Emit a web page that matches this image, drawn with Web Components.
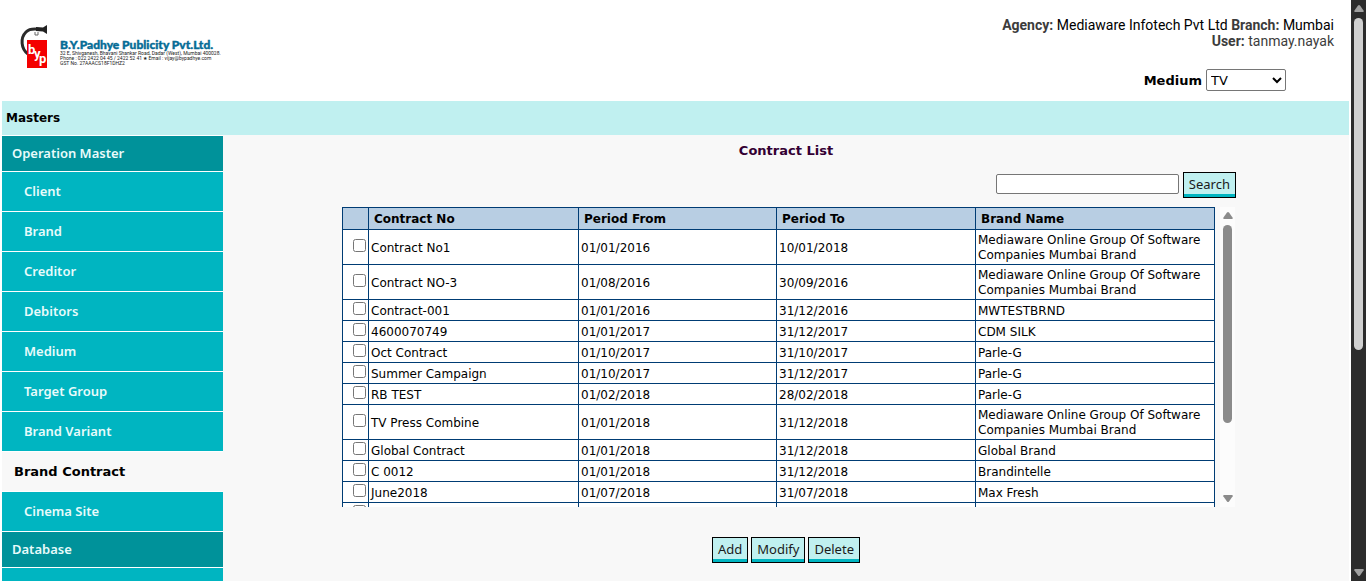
<!DOCTYPE html>
<html lang="en">
<head>
<meta charset="utf-8">
<title>Contract List</title>
<style>
html, body { margin: 0; height: 100%; overflow: hidden; background: #fff; }
body { font-family: "DejaVu Sans", Verdana, sans-serif; font-size: 12px; color: #000; }
</style>
</head>
<body>
<app-shell></app-shell>
<script>
function define(name, html, setup) {
  const tpl = document.createElement('template');
  tpl.innerHTML = html;
  customElements.define(name, class extends HTMLElement {
    constructor() {
      super();
      this.attachShadow({ mode: 'open' }).append(tpl.content.cloneNode(true));
    }
    connectedCallback() { if (setup) setup(this, this.shadowRoot); }
  });
}

define('scroll-strip', `
<style>
:host { display: flex; flex-direction: column; align-items: center; box-sizing: border-box; width: 15px; flex: none;
  padding: 5px 0; background: var(--track, #fcfcfc); color: var(--thumb, #8b8b8b); }
svg { display: block; width: 10px; height: 7px; flex: none; fill: var(--arrow, #8b8b8b); }
.track { flex: 1; align-self: stretch; padding: 6px 3px; display: flex; }
.track i { flex: 1; height: var(--size, 50%); border-radius: 5px; background: currentColor; }
</style>
<svg viewBox="0 0 10 7"><path d="M4 .6Q5-.4 6 .6L9.700 5.800Q10 7 9 7H1Q0 7 .3 5.800Z"/></svg>
<div class="track"><i></i></div>
<svg viewBox="0 0 10 7"><path d="M4 6.400Q5 7.400 6 6.400L9.700 1.200Q10 0 9 0H1Q0 0 .3 1.200Z"/></svg>
`);

define('action-button', `
<style>
:host { display: inline-flex; }
button { margin: 0; padding: 0 5px 2px; height: 26px; line-height: 20px; font-family: "Noto Sans", sans-serif; font-size: 13px;
  color: #1a1a1a; background: #c0f0f0; border: 1px solid #000; border-radius: 0; box-shadow: inset 0 -3px #00b5c1; }
</style>
<button type="button"><slot></slot></button>
`);

define('agency-logo', `
<style>
:host { display: flex; align-items: flex-start; gap: 7px; }
svg { display: block; width: 34px; height: 48px; flex: none; }
.words { padding-top: 15px; white-space: nowrap; }
.name { font: 900 12px/12px Lato, sans-serif; color: #056c96; -webkit-text-stroke: 0.4px #056c96; }
.addr { font: 5px/5px Roboto, sans-serif; color: #222; }
</style>
<svg viewBox="0 0 34 48" role="img" aria-label="byp">
  <path d="M9 30C2 25 1 14 7 8Q11 4 21 5.500" fill="none" stroke="#2b2b2b" stroke-width="3"/>
  <path d="M17 3L24 3.500L28 1V10L24 7.500L17 7Z" fill="#222"/>
  <path d="M16 8V11H19V8" fill="none" stroke="#666"/>
  <path d="M8 16H28V44H8Z" fill="#f40000"/>
  <g fill="#fff" font-family="Roboto, sans-serif" font-weight="700" font-size="13"><text x="9" y="30">b</text><text x="15" y="34">y</text><text x="20" y="39">p</text></g>
</svg>
<div class="words">
  <div class="name">B.Y.Padhye Publicity Pvt.Ltd.</div>
  <div class="addr">32 E, Shivganesh, Bhavani Shankar Road, Dadar (West), Mumbai 400028.</div>
  <div class="addr">Phone : 022 2422 04 45 / 2422 52 41 ★ Email : vijay@bypadhye.com</div>
  <div class="addr">GST No. 27AAACS18F1DHZ2</div>
</div>
`);

define('page-header', `
<style>
:host { display: flex; justify-content: space-between; align-items: flex-start; height: 101px; }
agency-logo { padding: 24px 0 0 17px; }
.info { padding: 17px 15px 0 0; display: flex; flex-direction: column; text-align: right; }
p { margin: 0; font: 14px/16px Roboto, "Liberation Sans", sans-serif; color: #3c3c3c; }
p span { color: #000; }
.medium { display: flex; justify-content: flex-end; align-items: center; gap: 4px; padding: 20px 48px 0 0; }
label { font-weight: bold; font-size: 13px; }
select { box-sizing: border-box; width: 80px; height: 22px; font: 13px "DejaVu Sans", sans-serif; background: #fff; color: #000; border: 1px solid #767676; border-radius: 2px; padding: 0; }
</style>
<agency-logo></agency-logo>
<div class="info">
  <p><b>Agency:</b> <span>Mediaware Infotech Pvt Ltd</span> <b>Branch:</b> <span>Mumbai</span></p>
  <p><b>User:</b> tanmay.nayak</p>
  <div class="medium"><label for="m">Medium</label><select id="m"><option>TV</option></select></div>
</div>
`);

define('nav-item', `
<style>
:host { display: block; border-bottom: 1px solid #fff; }
a { display: block; min-height: 39px; padding-left: 22px; font: 600 13px/39px "Noto Sans", sans-serif; color: #e8fbfb; background: #00b5c1; text-decoration: none; }
:host([heading]) a { min-height: 35px; padding-left: 10px; line-height: 35px; background: #00929a; }
:host([current]) a { padding-left: 12px; font: bold 13px/39px "DejaVu Sans", sans-serif; color: #000; background: #f8f8f8; }
</style>
<a href="#"><slot></slot></a>
`);

define('side-nav', `
<style>
:host { display: block; width: 221px; flex: none; border-top: 1px solid #fff; background: #fff; }
</style>
<nav>
<nav-item heading>Operation Master</nav-item>
<nav-item>Client</nav-item>
<nav-item>Brand</nav-item>
<nav-item>Creditor</nav-item>
<nav-item>Debitors</nav-item>
<nav-item>Medium</nav-item>
<nav-item>Target Group</nav-item>
<nav-item>Brand Variant</nav-item>
<nav-item current>Brand Contract</nav-item>
<nav-item>Cinema Site</nav-item>
<nav-item heading>Database</nav-item>
<nav-item></nav-item>
</nav>
`);

const LONG = 'Mediaware Online Group Of Software Companies Mumbai Brand';
const CONTRACTS = [
  ['Contract No1', '01/01/2016', '10/01/2018', LONG],
  ['Contract NO-3', '01/08/2016', '30/09/2016', LONG],
  ['Contract-001', '01/01/2016', '31/12/2016', 'MWTESTBRND'],
  ['4600070749', '01/01/2017', '31/12/2017', 'CDM SILK'],
  ['Oct Contract', '01/10/2017', '31/10/2017', 'Parle-G'],
  ['Summer Campaign', '01/10/2017', '31/12/2017', 'Parle-G'],
  ['RB TEST', '01/02/2018', '28/02/2018', 'Parle-G'],
  ['TV Press Combine', '01/01/2018', '31/12/2018', LONG],
  ['Global Contract', '01/01/2018', '31/12/2018', 'Global Brand'],
  ['C 0012', '01/01/2018', '31/12/2018', 'Brandintelle'],
  ['June2018', '01/07/2018', '31/07/2018', 'Max Fresh'],
  ['', '', '', '']
];

define('contract-table', `
<style>
:host { display: flex; height: 300px; gap: 5px; }
.view { flex: 1; overflow: hidden; }
table { width: 100%; table-layout: fixed; border-collapse: collapse; background: #fff; line-height: 15px; }
th, td { border: 1px solid #003c74; text-align: left; height: 16px; padding: 3px 2px 1px; }
th { height: 17px; padding: 3px 5px 1px; background: #b8cee3; }
.c0 { width: 26px; } .c1 { width: 210px; } .c2 { width: 198px; } .c3 { width: 199px; }
td:first-child { padding: 0 2px 3px 0; height: 17px; text-align: right; font-size: 0; line-height: 0; }
input { width: 13px; height: 13px; margin: 0; vertical-align: top; }
</style>
<div class="view"><table>
<colgroup><col class="c0"><col class="c1"><col class="c2"><col class="c3"><col></colgroup>
<thead><tr><th></th><th>Contract No</th><th>Period From</th><th>Period To</th><th>Brand Name</th></tr></thead>
<tbody></tbody>
</table></div>
<scroll-strip style="--size:75%"></scroll-strip>
`, (host, root) => {
  const body = root.querySelector('tbody');
  for (const row of CONTRACTS) {
    const tr = body.insertRow();
    const box = document.createElement('input');
    box.type = 'checkbox';
    box.setAttribute('aria-label', 'Select ' + row[0]);
    tr.insertCell().append(box);
    for (const text of row) tr.insertCell().textContent = text;
  }
});

define('contract-page', `
<style>
:host { display: block; flex: 1; min-width: 0; background: #f8f8f8; }
h1 { margin: 0; padding-top: 8px; font-size: 13px; line-height: 16px; color: #330033; text-align: center; }
.list { margin: 13px 114px 0 119px; }
form { display: flex; justify-content: flex-end; align-items: flex-start; gap: 4px; margin: 0 -1px 9px 0; }
input { box-sizing: border-box; width: 183px; height: 20px; margin: 2px 0 0; border: 1px solid #767676; border-radius: 2px; background: #fff; }
.actions { display: flex; justify-content: center; gap: 3px; padding-top: 30px; }
</style>
<h1>Contract List</h1>
<div class="list">
  <form><input type="text" aria-label="Search contracts"><action-button>Search</action-button></form>
  <contract-table></contract-table>
</div>
<div class="actions"><action-button>Add</action-button><action-button>Modify</action-button><action-button>Delete</action-button></div>
`);

define('app-shell', `
<style>
:host { display: flex; height: 100vh; }
.page { flex: 1; min-width: 0; padding: 0 2px; overflow: hidden; display: flex; flex-direction: column; }
page-header { flex: none; }
.crumb { flex: none; padding-left: 4px; line-height: 34px; font-weight: bold; background: #c0f0f0; }
.body { display: flex; flex: none; min-height: 480px; }
</style>
<div class="page">
  <page-header></page-header>
  <div class="crumb">Masters</div>
  <div class="body"><side-nav></side-nav><contract-page></contract-page></div>
</div>
<scroll-strip style="--track:#2c2c2c;--thumb:#d0d0d0;--arrow:#a0a0a0;--size:61%"></scroll-strip>
`);
</script>
</body>
</html>
